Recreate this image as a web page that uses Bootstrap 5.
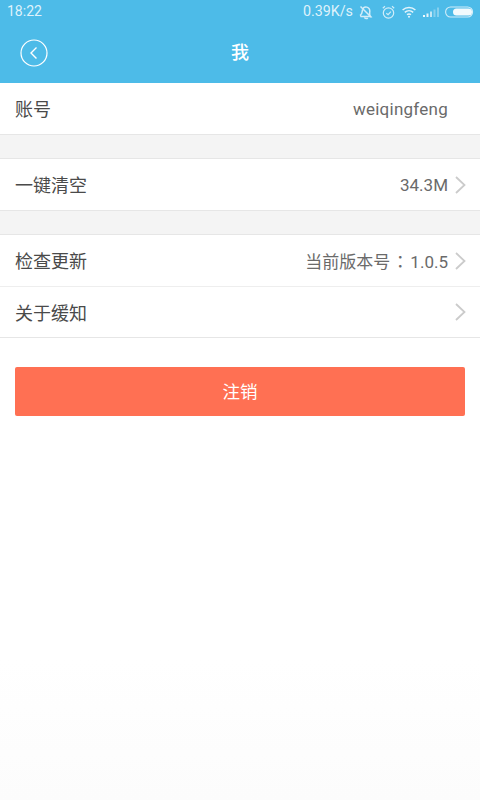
<!DOCTYPE html>
<html lang="zh">
<head>
<meta charset="utf-8">
<title>我</title>
<link rel="stylesheet" href="https://cdn.jsdelivr.net/npm/bootstrap@5.3.0/dist/css/bootstrap.min.css">
<style>
html,body{height:100%;}
body{width:480px;height:800px;overflow:hidden;background:linear-gradient(#fff 0,#fff 660px,#fcfcfc 800px);font-family:"Roboto","Noto Sans CJK SC",sans-serif;color:#4a4a4a;}
.hdr{background:#4dbbe8;height:83px;color:#fff;}
.sbar{height:23px;padding:0 6px 0 7px;font-size:14px;color:#dff2fb;}
.spd{font-size:14.300px;margin-right:6px;}
.ic-clock{margin-left:9px;}
.ic-wifi{margin-left:7px;}
.ic-sig{margin-left:7px;}
.ic-bat{margin-left:6px;}
.tbar{height:60px;padding:0 20px;}
.ttl{font-size:18px;flex:1;text-align:center;margin-right:28px;margin-top:-1px;font-weight:500;}
.sect{border-bottom:1px solid #e6e6e6;background:#fff;}
.sect.top{border-top:1px solid #e6e6e6;}
.rowi{height:51px;padding:2px 14px 0 15px;font-size:18px;color:#4a4a4a;}
.rowi+.rowi{border-top:1px solid #eee;}
.val{color:#6a6a6a;font-size:17px;}
.val.acct{margin-right:18px;letter-spacing:.25px;}
.colon{font-family:"Noto Sans CJK TC",sans-serif;text-spacing-trim:space-all;display:inline-block;width:20px;text-align:center;}
.gapb{height:23px;background:#f4f4f4;}
.chev{margin-left:7px;margin-top:-2px;}
.wrapb{padding:29px 15px 0;}
.logout{background:#ff7053;border:0;color:#fff;font-size:17.500px;height:49px;padding-top:8px;border-radius:2px;width:100%;}
.logout:hover{background:#ff7053;color:#fff;}
</style>
</head>
<body>
<div class="hdr">
  <div class="sbar d-flex align-items-center justify-content-between">
    <span>18:22</span>
    <div class="d-flex align-items-center">
      <span class="spd">0.39K/s</span>
      <svg width="14" height="16" viewBox="0 0 14 16" fill="none" stroke="#d2edf9" stroke-width="1.500"><path d="M2 12.500 1.500 11C3.500 9.500 3 7.500 3.500 5.800 4.200 3.600 6 2.600 7.800 3.100c1.800.5 3.100 2.200 3 4.400-.1 1.800-.8 3.500.8 5zM2 12.500l9.600 0M5.500 13.500c.5 1.300 2.500 1.500 3.200.3M1.500 2.500l11 11"/></svg>
      <svg class="ic-clock" width="13" height="16" viewBox="0 0 13 16" fill="none" stroke="#d2edf9" stroke-width="1.200"><circle cx="6.500" cy="9" r="5.200"/><path d="M4.300 9.200l1.800 1.500 2.800-3M.8 4.200 3 2.300M12.200 4.200 10 2.300"/></svg>
      <svg class="ic-wifi" width="14" height="14" viewBox="0 0 14 14" fill="none" stroke="#e4f4fb" stroke-width="1.500"><path d="M.6 5c3.600-3.300 9.200-3.300 12.800 0M2.800 7.400c2.400-2.100 6-2.100 8.400 0M5 9.700c1.200-.9 2.800-.9 4 0"/><circle cx="7" cy="11.800" r="1" fill="#e4f4fb" stroke="none"/></svg>
      <svg class="ic-sig" width="16" height="12" viewBox="0 0 16 12"><rect x="0" y="9" width="2" height="2" fill="#eef9fd"/><rect x="3.500" y="7.500" width="2" height="3.500" fill="#e4f4fb"/><rect x="7" y="5.500" width="2" height="5.500" fill="#c2e7f6"/><rect x="10.500" y="3.500" width="2" height="7.500" fill="#86d0ee"/><rect x="14" y="1.500" width="2" height="9.500" fill="#86d0ee"/></svg>
      <svg class="ic-bat" width="29" height="12" viewBox="0 0 29 12"><rect x=".6" y="1" width="27" height="10" rx="5" fill="none" stroke="#d2edf9" stroke-width="1.100"/><rect x="8" y="2.500" width="19" height="7" rx="3.500" fill="#f2fafd"/></svg>
    </div>
  </div>
  <div class="tbar d-flex align-items-center">
    <svg width="28" height="28" viewBox="0 0 28 28" fill="none" stroke="#fff" stroke-width="1.200"><circle cx="14" cy="14" r="13"/><path d="M16.500 8.500 11 14l5.500 5.500" stroke-width="1.400"/></svg>
    <div class="ttl">我</div>
  </div>
</div>

<div class="sect">
  <div class="rowi d-flex align-items-center justify-content-between">
    <span>账号</span><span class="val acct">weiqingfeng</span>
  </div>
</div>
<div class="gapb"></div>
<div class="sect top">
  <div class="rowi d-flex align-items-center justify-content-between">
    <span>一键清空</span>
    <span class="d-flex align-items-center"><span class="val">34.3M</span>
      <svg class="chev" width="11" height="18" viewBox="0 0 11 18" fill="none" stroke="#cbcbcb" stroke-width="1.800"><path d="M1 1l8.500 8L1 17"/></svg></span>
  </div>
</div>
<div class="gapb"></div>
<div class="sect top">
  <div class="rowi d-flex align-items-center justify-content-between">
    <span>检查更新</span>
    <span class="d-flex align-items-center"><span class="val">当前版本号<span class="colon" lang="zh-TW">：</span>1.0.5</span>
      <svg class="chev" width="11" height="18" viewBox="0 0 11 18" fill="none" stroke="#cbcbcb" stroke-width="1.800"><path d="M1 1l8.500 8L1 17"/></svg></span>
  </div>
  <div class="rowi d-flex align-items-center justify-content-between">
    <span>关于缓知</span>
    <svg class="chev" width="11" height="18" viewBox="0 0 11 18" fill="none" stroke="#cbcbcb" stroke-width="1.800"><path d="M1 1l8.500 8L1 17"/></svg>
  </div>
</div>
<div class="wrapb"><button class="btn logout" type="button">注销</button></div>
<script src="https://cdn.jsdelivr.net/npm/bootstrap@5.3.0/dist/js/bootstrap.bundle.min.js"></script>
</body>
</html>
